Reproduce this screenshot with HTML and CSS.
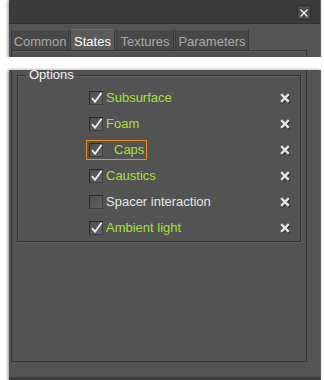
FILE: index.html
```html
<!DOCTYPE html>
<html lang="en">

<head>
    <meta charset="UTF-8">
    <title>States</title>
    <link rel="stylesheet" href="styles.css">
</head>

<body>
    <!-- Upper part of the dialog -->
    <div class="window top">
        <div class="titlebar">
            <button class="close">
                <svg width="10" height="10" viewBox="0 0 10 10">
                    <path d="M1.5 1.5 L8.5 8.5 M8.5 1.5 L1.5 8.5" stroke="#f0f0f0" stroke-width="1.4" fill="none"/>
                </svg>
            </button>
        </div>
        <div class="tabs">
            <div class="tab tab-common">Common</div>
            <div class="tab tab-states active">States</div>
            <div class="tab tab-textures">Textures</div>
            <div class="tab tab-params">Parameters</div>
        </div>
        <div class="page page-top"></div>
    </div>

    <!-- White cut through the screenshot -->
    <div class="cut"></div>

    <!-- Lower part of the dialog -->
    <div class="window bottom">
        <div class="page page-bottom">
            <fieldset class="group">
                <legend>Options</legend>

                <div class="row">
                    <label class="item on"><span class="cb"><svg width="14" height="14" viewBox="0 0 14 14"><path d="M3 7.2 L6 10.8 L12.6 1.8" /></svg></span><span class="txt">Subsurface</span></label>
                    <svg class="x" width="11" height="11" viewBox="0 0 11 11"><path class="sh" d="M2.2 2.2 L9.8 9.8 M9.8 2.2 L2.2 9.8"/><path class="fg" d="M1.2 1.2 L8.8 8.8 M8.8 1.2 L1.2 8.8"/></svg>
                </div>

                <div class="row">
                    <label class="item on"><span class="cb"><svg width="14" height="14" viewBox="0 0 14 14"><path d="M3 7.2 L6 10.8 L12.6 1.8" /></svg></span><span class="txt">Foam</span></label>
                    <svg class="x" width="11" height="11" viewBox="0 0 11 11"><path class="sh" d="M2.2 2.2 L9.8 9.8 M9.8 2.2 L2.2 9.8"/><path class="fg" d="M1.2 1.2 L8.8 8.8 M8.8 1.2 L1.2 8.8"/></svg>
                </div>

                <div class="row">
                    <label class="item on focused"><span class="cb"><svg width="14" height="14" viewBox="0 0 14 14"><path d="M3 7.2 L6 10.8 L12.6 1.8" /></svg></span><span class="txt">Caps</span></label>
                    <svg class="x" width="11" height="11" viewBox="0 0 11 11"><path class="sh" d="M2.2 2.2 L9.8 9.8 M9.8 2.2 L2.2 9.8"/><path class="fg" d="M1.2 1.2 L8.8 8.8 M8.8 1.2 L1.2 8.8"/></svg>
                </div>

                <div class="row">
                    <label class="item on"><span class="cb"><svg width="14" height="14" viewBox="0 0 14 14"><path d="M3 7.2 L6 10.8 L12.6 1.8" /></svg></span><span class="txt">Caustics</span></label>
                    <svg class="x" width="11" height="11" viewBox="0 0 11 11"><path class="sh" d="M2.2 2.2 L9.8 9.8 M9.8 2.2 L2.2 9.8"/><path class="fg" d="M1.2 1.2 L8.8 8.8 M8.8 1.2 L1.2 8.8"/></svg>
                </div>

                <div class="row">
                    <label class="item"><span class="cb"></span><span class="txt">Spacer interaction</span></label>
                    <svg class="x" width="11" height="11" viewBox="0 0 11 11"><path class="sh" d="M2.2 2.2 L9.8 9.8 M9.8 2.2 L2.2 9.8"/><path class="fg" d="M1.2 1.2 L8.8 8.8 M8.8 1.2 L1.2 8.8"/></svg>
                </div>

                <div class="row">
                    <label class="item on"><span class="cb"><svg width="14" height="14" viewBox="0 0 14 14"><path d="M3 7.2 L6 10.8 L12.6 1.8" /></svg></span><span class="txt">Ambient light</span></label>
                    <svg class="x" width="11" height="11" viewBox="0 0 11 11"><path class="sh" d="M2.2 2.2 L9.8 9.8 M9.8 2.2 L2.2 9.8"/><path class="fg" d="M1.2 1.2 L8.8 8.8 M8.8 1.2 L1.2 8.8"/></svg>
                </div>
            </fieldset>
        </div>
    </div>
</body>

</html>
```

FILE: styles.css
```css
/* General Styling */
body {
    margin: 0;
    padding: 0;
    width: 324px;
    height: 380px;
    overflow: hidden;
    background: #fff;
    font-family: 'Liberation Sans', Arial, sans-serif;
    font-size: 13px;
}

/* Dialog window (drawn in two pieces) */
.window {
    margin-left: 9px;
    width: 312px;
    box-sizing: border-box;
    background-color: #545454;
    border-right: 1px solid #626262;
    box-shadow: -1px 0 3px rgba(0, 0, 0, 0.45);
}

.window.top {
    height: 57px;
}

.window.bottom {
    height: 310px;
    border-bottom: 3px solid #3c3c3c;
}

/* Title bar */
.titlebar {
    height: 24px;
    box-sizing: border-box;
    padding: 5px 9px 0 0;
    background-color: #3b3b3b;
    border-bottom: 1px solid #2f2f2f;
    display: flex;
    justify-content: flex-end;
    align-items: flex-start;
}

.close {
    width: 14px;
    height: 15px;
    padding: 0;
    border: 1px solid #2a2a2a;
    border-radius: 2px;
    background-color: #4a4a4a;
    display: flex;
    align-items: center;
    justify-content: center;
}

/* Tabs */
.tabs {
    display: flex;
    gap: 1px;
    margin: 5px 0 0 2px;
    height: 21px;
}

.tab {
    box-sizing: border-box;
    height: 21px;
    padding-top: 2px;
    line-height: 19px;
    text-align: center;
    color: #a9a9a9;
    background-color: #484848;
    border: 1px solid #3a3a3a;
    border-bottom: none;
    border-top-color: #5e5e5e;
}

.tab.active {
    color: #fff;
    background-color: #5b5b5b;
    border-top-color: #6a6a6a;
}

.tab-common { width: 58px; }
.tab-states { width: 45px; }
.tab-textures { width: 58px; }
.tab-params { width: 74px; }

/* Tab page */
.page {
    margin-left: 2px;
    width: 296px;
    box-sizing: border-box;
    background-color: #535353;
    border: 1px solid #363636;
}

.page-top {
    height: 7px;
    border-bottom: none;
    box-shadow: inset 0 1px 0 #5f5f5f;
}

.page-bottom {
    height: 292px;
    border-top: none;
    padding: 0 5px;
}

/* The white band */
.cut {
    height: 13px;
    background: #fff;
}

/* Group box */
.group {
    margin: 0;
    padding: 5px 8px 0 8px;
    border: 1px solid #333;
    box-shadow: 1px 1px 0 #5e5e5e, inset 1px 1px 0 #5e5e5e;
}

.group legend {
    padding: 0 3px;
    line-height: 10px;
    color: #f2f2f2;
}

.row {
    height: 26px;
    padding-left: 63px;
    display: flex;
    align-items: center;
    justify-content: space-between;
}

.item {
    display: flex;
    align-items: center;
    gap: 3px;
    line-height: 14px;
    color: #e6e6e6;
}

.item.on {
    color: #a3e13a;
}

.item.focused {
    outline: 1px solid #f08a1c;
    outline-offset: 2px;
}

.item.focused .txt {
    padding-left: 8px;
}

/* Checkbox */
.cb {
    width: 14px;
    height: 14px;
    box-sizing: border-box;
    border: 1px solid #2c2c2c;
    border-right-color: #3e3e3e;
    border-bottom-color: #3e3e3e;
    background: linear-gradient(135deg, #4e4e4e, #626262);
    display: block;
}

.cb svg {
    display: block;
    margin: -1px;
}

.cb path {
    fill: none;
    stroke: #ececec;
    stroke-width: 1.8;
}

/* Remove icons */
.x {
    margin-right: 1px;
    display: block;
}

.x path {
    fill: none;
    stroke-width: 2.4;
}

.x .sh {
    stroke: #2b2b2b;
}

.x .fg {
    stroke: #e2e2e2;
}
```
